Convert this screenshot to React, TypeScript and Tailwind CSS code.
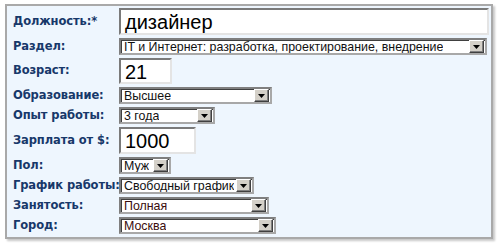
import React from "react";

type Row =
  | { label: string; kind: "input"; value: string; width: number; height: number }
  | { label: string; kind: "select"; value: string; width: number; red?: boolean };

const rows: Row[] = [
  { label: "Должность:*", kind: "input", value: "дизайнер", width: 370, height: 27 },
  { label: "Раздел:", kind: "select", value: "IT и Интернет: разработка, проектирование, внедрение", width: 368 },
  { label: "Возраст:", kind: "input", value: "21", width: 53, height: 26 },
  { label: "Образование:", kind: "select", value: "Высшее", width: 153 },
  { label: "Опыт работы:", kind: "select", value: "3 года", width: 96 },
  { label: "Зарплата от $:", kind: "input", value: "1000", width: 77, height: 27 },
  { label: "Пол:", kind: "select", value: "Муж", width: 52 },
  { label: "График работы:", kind: "select", value: "Свободный график", width: 135 },
  { label: "Занятость:", kind: "select", value: "Полная", width: 150, red: true },
  { label: "Город:", kind: "select", value: "Москва", width: 157, red: true },
];

function Arrow() {
  return (
    <span className="mr-[1px] flex h-[13px] w-[15px] shrink-0 items-center justify-center border border-t-white border-l-white border-r-[#404040] border-b-[#404040] bg-[#d4d0c8] shadow-[inset_-1px_-1px_0_#808080]">
      <svg width="7" height="4" viewBox="0 0 7 4">
        <path d="M0 0h7L3.5 4z" fill="#000" />
      </svg>
    </span>
  );
}

function Field({ row }: { row: Row }) {
  if (row.kind === "input") {
    return (
      <div
        className="flex items-center border-2 border-t-[#7a7a7a] border-l-[#7a7a7a] border-r-[#e4e4e4] border-b-[#e4e4e4] bg-white pl-[4px] pt-[1px] text-[20px] leading-none text-black"
        style={{ width: row.width, height: row.height }}
      >
        {row.value}
      </div>
    );
  }
  return (
    <div
      className="flex h-[17px] items-center justify-between border-2 border-t-[#7f7f7f] border-l-[#7f7f7f] border-r-[#a8a8a8] border-b-[#a8a8a8] bg-white pl-[3px] shadow-[inset_1px_1px_0_#404040]"
      style={{ width: row.width }}
    >
      <span className={`truncate pt-[1px] text-[12.4px] leading-none ${row.red ? "text-[#3a0d0d]" : "text-[#111]"}`}>
        {row.value}
      </span>
      <Arrow />
    </div>
  );
}

export default function App() {
  return (
    <div className="h-[247px] w-[500px] bg-white pl-[5px] pt-[4px] font-['Liberation_Sans',Arial,sans-serif]">
      <div className="h-[235px] w-[488px] border-2 border-[#a9a9a9] bg-[#eef6fe] pl-[5px] pt-[2px] shadow-[2px_2px_2px_#c8c8c8]">
        <div className="grid grid-cols-[107px_1fr] gap-y-[3px]">
          {rows.map((row) => (
            <React.Fragment key={row.label}>
              <div className="flex items-center whitespace-nowrap pl-[1px] font-['DejaVu_Sans',Verdana,sans-serif] text-[11.5px] leading-none font-bold tracking-[-0.1px] text-[#17386a]">
                {row.label}
              </div>
              <div className="flex items-center">
                <Field row={row} />
              </div>
            </React.Fragment>
          ))}
        </div>
      </div>
    </div>
  );
}
